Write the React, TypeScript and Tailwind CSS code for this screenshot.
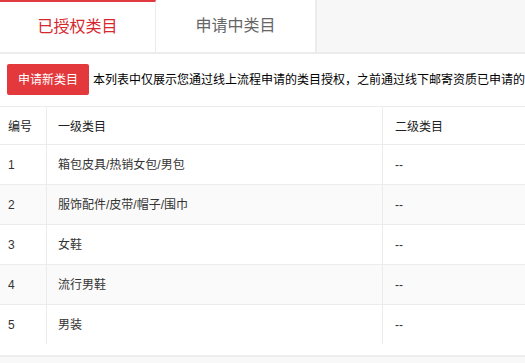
import React from "react";

const rows = [
  { id: "1", c1: "箱包皮具/热销女包/男包", c2: "--" },
  { id: "2", c1: "服饰配件/皮带/帽子/围巾", c2: "--" },
  { id: "3", c1: "女鞋", c2: "--" },
  { id: "4", c1: "流行男鞋", c2: "--" },
  { id: "5", c1: "男装", c2: "--" },
];

export default function App() {
  return (
    <div
      className="w-[525px] h-[363px] overflow-hidden bg-white text-[#333]"
      style={{ fontFamily: '"Liberation Sans", "Noto Sans CJK SC", sans-serif' }}
    >
      {/* Tabs */}
      <div className="flex h-[54px] border-b-2 border-[#ececec] bg-[#f7f7f7]">
        <div className="w-[156px] border-t-2 border-[#e0393e] border-r border-r-[#ececec] bg-white flex items-center justify-center text-[16px] text-[#d7262e]">
          已授权类目
        </div>
        <div className="w-[161px] border-r-2 border-[#ececec] bg-white flex items-center justify-center text-[16px] text-[#666]">
          申请中类目
        </div>
        <div className="flex-1" />
      </div>

      {/* Action row */}
      <div className="flex items-center pl-[7px] mt-[10px] h-[31px]">
        <button className="shrink-0 w-[82px] h-[31px] rounded-[2px] bg-[#e3393c] text-white text-[12px]">
          申请新类目
        </button>
        <div className="ml-[4px] min-w-0 text-[12px] text-black whitespace-nowrap overflow-hidden">
          本列表中仅展示您通过线上流程申请的类目授权，之前通过线下邮寄资质已申请的类目请联系小二查询
        </div>
      </div>

      {/* Table */}
      <div className="mt-[11px] w-[600px] border-t border-[#ececec]">
        <div className="flex h-[38px] border-b border-[#ececec] text-[12px] text-[#222]">
          <div className="w-[47px] border-r border-[#ececec] pl-[8px] pt-[2px] flex items-center">编号</div>
          <div className="w-[336px] border-r border-[#ececec] pl-[11px] pt-[2px] flex items-center">一级类目</div>
          <div className="flex-1 pl-[12px] pt-[2px] flex items-center">二级类目</div>
        </div>
        {rows.map((r, i) => (
          <div
            key={r.id}
            className={`flex text-[12px] text-[#333] ${i % 2 === 1 ? "bg-[#fafafa]" : "bg-white"} ${
              i < rows.length - 1 ? "h-[40px] border-b border-[#ececec]" : "h-[39px]"
            }`}
          >
            <div className="w-[47px] border-r border-[#ececec] pl-[8px] pt-[1px] flex items-center">{r.id}</div>
            <div className="w-[336px] border-r border-[#ececec] pl-[11px] pt-[1px] flex items-center">{r.c1}</div>
            <div className="flex-1 pl-[12px] pt-[1px] flex items-center">{r.c2}</div>
          </div>
        ))}
      </div>

      <div className="mt-[11px] h-[20px] border-t-2 border-[#ededed] bg-[#f8f8f8]" />
    </div>
  );
}
